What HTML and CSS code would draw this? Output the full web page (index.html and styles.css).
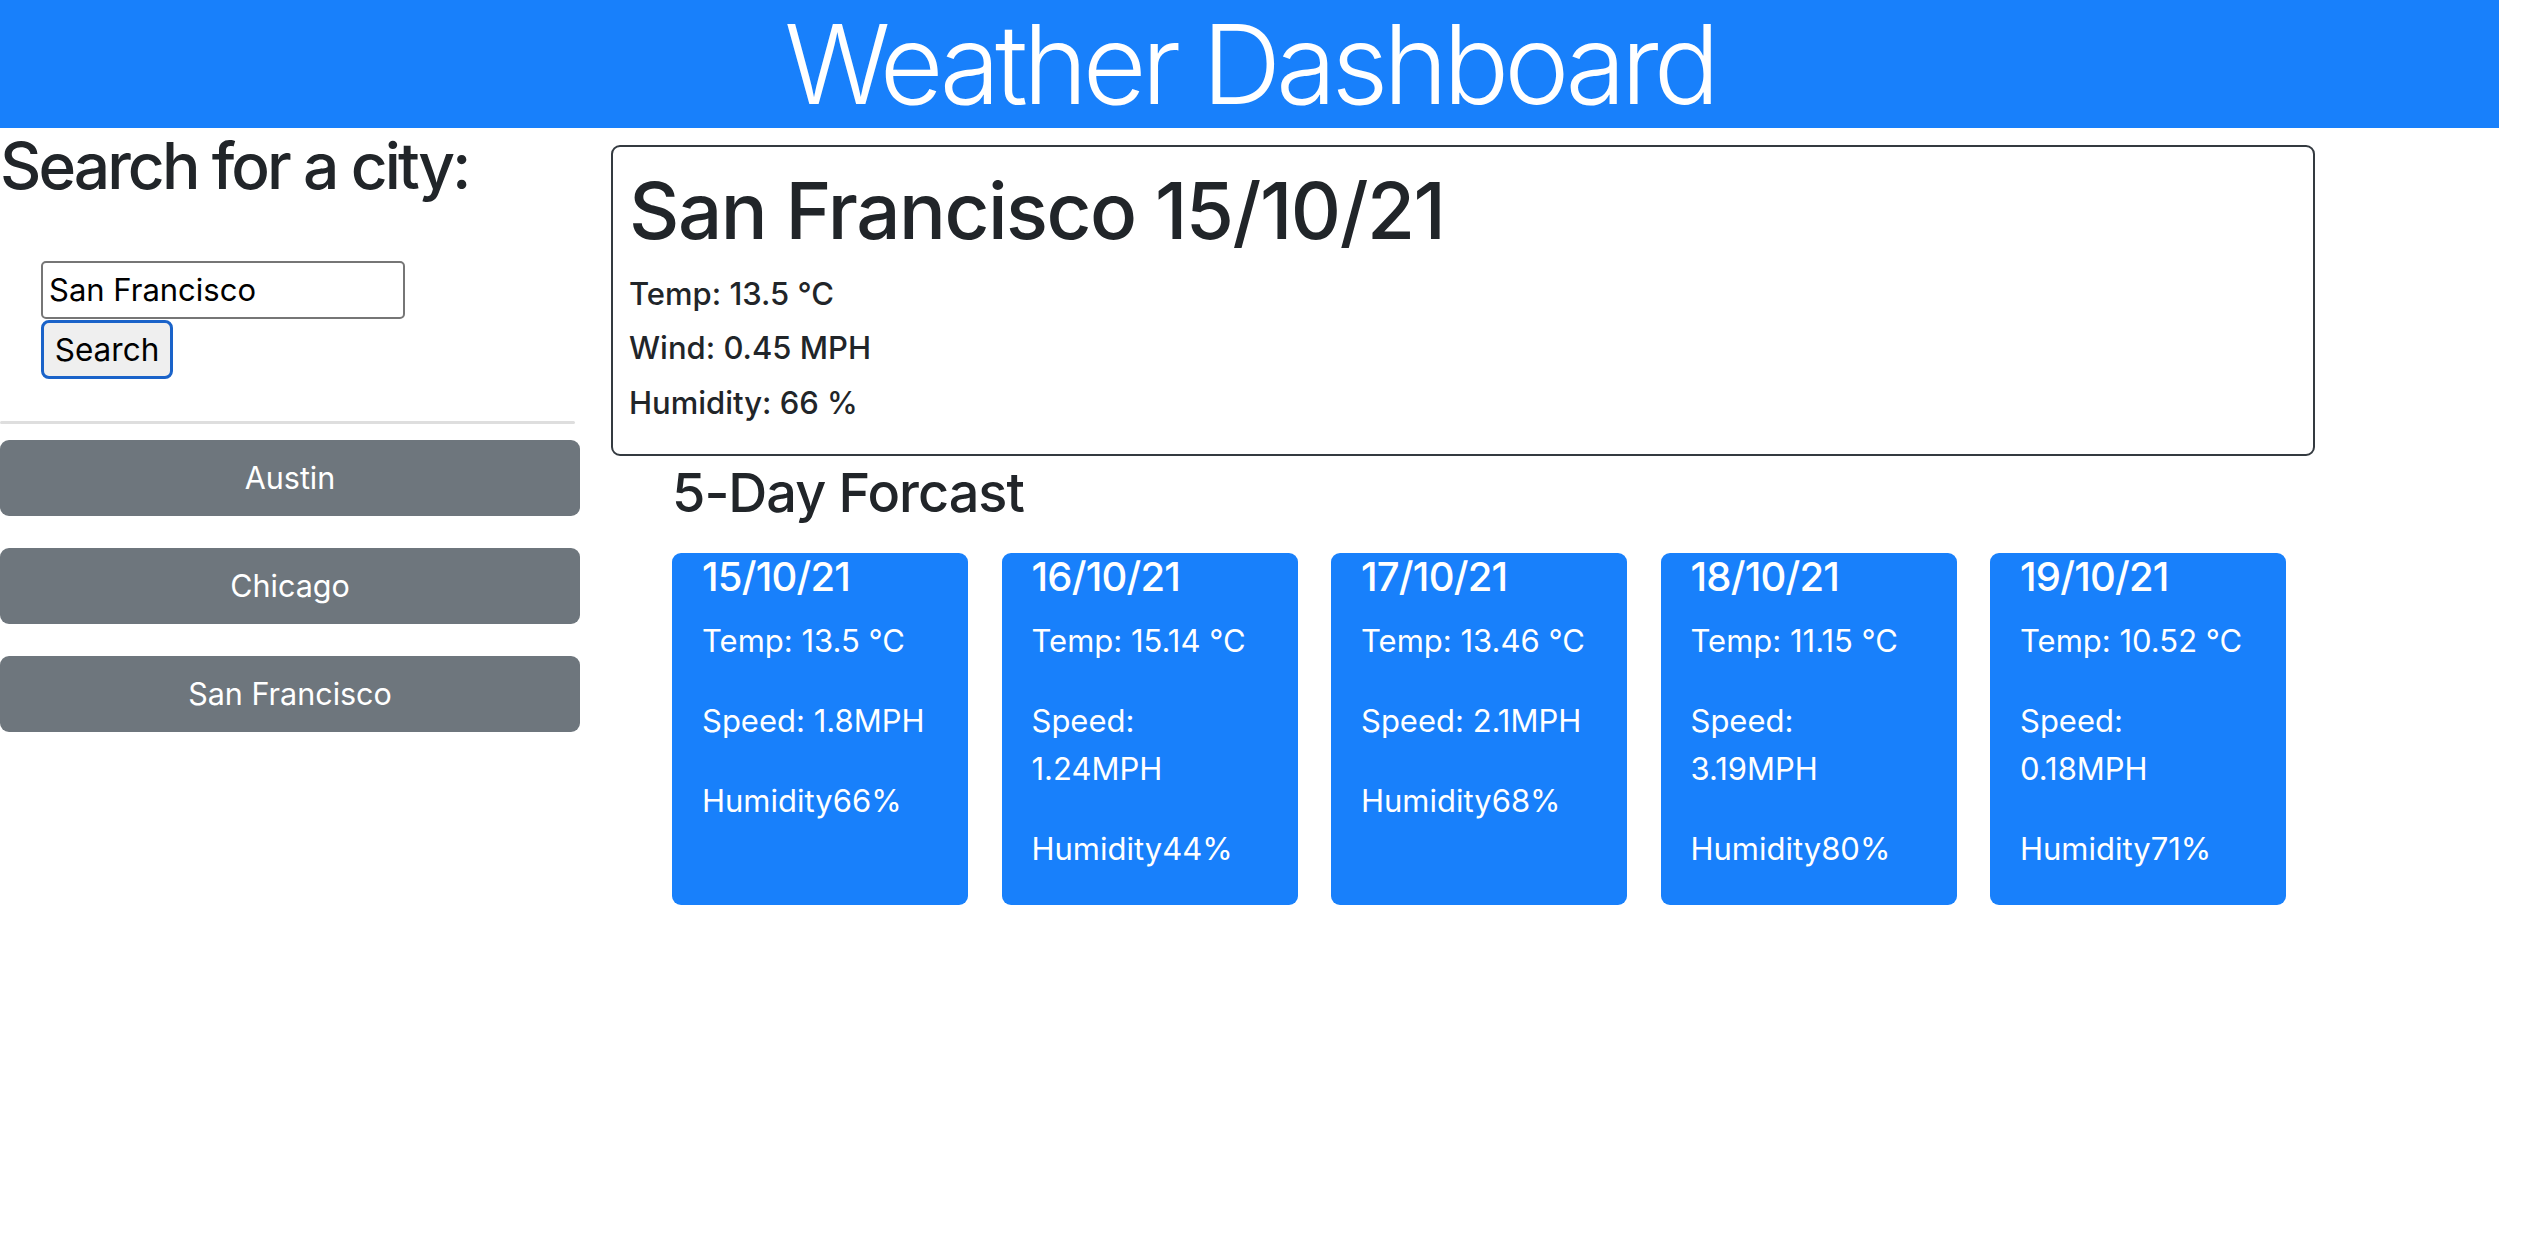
FILE: index.html
```html
<!DOCTYPE html>
<html lang="en">
<head>
<meta charset="utf-8">
<title>Weather Dashboard</title>
<link rel="stylesheet" href="styles.css">
</head>
<body>
<header class="topbar">
  <h1 class="app-title">Weather Dashboard</h1>
</header>
<main class="layout">
  <aside class="sidebar">
    <h2 class="search-title">Search for a city:</h2>
    <form class="search-form">
      <input class="search-input" type="text" value="San Francisco">
      <button class="search-btn" type="button">Search</button>
    </form>
    <hr class="divider">
    <div class="history">
      <button class="history-btn" type="button">Austin</button>
      <button class="history-btn" type="button">Chicago</button>
      <button class="history-btn" type="button">San Francisco</button>
    </div>
  </aside>
  <section class="content">
    <div class="current">
      <h1 class="current-title">San Francisco 15/10/21</h1>
      <h6 class="current-stat">Temp: 13.5 °C</h6>
      <h6 class="current-stat">Wind: 0.45 MPH</h6>
      <h6 class="current-stat">Humidity: 66 %</h6>
    </div>
    <div class="forecast">
      <h3 class="forecast-title">5-Day Forcast</h3>
      <div class="forecast-row">
        <div class="day-card">
          <h5 class="day-date">15/10/21</h5>
          <p class="day-stat">Temp: 13.5 °C</p>
          <p class="day-stat">Speed: 1.8MPH</p>
          <p class="day-stat">Humidity66%</p>
        </div>
        <div class="day-card">
          <h5 class="day-date">16/10/21</h5>
          <p class="day-stat">Temp: 15.14 °C</p>
          <p class="day-stat">Speed: 1.24MPH</p>
          <p class="day-stat">Humidity44%</p>
        </div>
        <div class="day-card">
          <h5 class="day-date">17/10/21</h5>
          <p class="day-stat">Temp: 13.46 °C</p>
          <p class="day-stat">Speed: 2.1MPH</p>
          <p class="day-stat">Humidity68%</p>
        </div>
        <div class="day-card">
          <h5 class="day-date">18/10/21</h5>
          <p class="day-stat">Temp: 11.15 °C</p>
          <p class="day-stat">Speed: 3.19MPH</p>
          <p class="day-stat">Humidity80%</p>
        </div>
        <div class="day-card">
          <h5 class="day-date">19/10/21</h5>
          <p class="day-stat">Temp: 10.52 °C</p>
          <p class="day-stat">Speed: 0.18MPH</p>
          <p class="day-stat">Humidity71%</p>
        </div>
      </div>
    </div>
  </section>
</main>
</body>
</html>
```
FILE: styles.css
```css
* {
  box-sizing: border-box;
}

html, body {
  margin: 0;
  padding: 0;
  background: #ffffff;
}

body {
  font-family: Inter, "Noto Sans", "Liberation Sans", sans-serif;
  color: #212529;
  font-size: 32px;
  line-height: 1.5;
}

.topbar {
  width: 2499px;
  height: 128px;
  background: #1880fb;
  display: flex;
  justify-content: center;
}

.app-title {
  margin: 0;
  font-size: 110px;
  font-weight: 300;
  line-height: 128px;
  color: #ffffff;
  letter-spacing: -5px;
}

.layout {
  display: flex;
  align-items: flex-start;
  width: 2499px;
}

.sidebar {
  width: 580px;
  flex: none;
}

.search-title {
  margin: 0;
  font-size: 64px;
  font-weight: 500;
  line-height: 1.2;
  letter-spacing: -2.9px;
}

.search-form {
  display: flex;
  flex-direction: column;
  align-items: flex-start;
  padding: 56px 0 0 41px;
}

.search-input {
  width: 364px;
  height: 58px;
  border: 2px solid #767676;
  border-radius: 5px;
  padding: 0 6px;
  font-family: Inter, "Noto Sans", sans-serif;
  font-size: 31px;
  color: #000000;
  background: #ffffff;
  outline: none;
}

.search-btn {
  width: 132px;
  height: 59px;
  margin-top: 1px;
  border: 3px solid #1a63c9;
  border-radius: 8px;
  background: #efefef;
  font-family: Inter, "Noto Sans", sans-serif;
  font-size: 31.5px;
  color: #000000;
  padding: 0;
}

.divider {
  margin: 42px 0 16px 0;
  width: 575px;
  height: 3px;
  border: none;
  border-radius: 2px;
  background: #dedede;
}

.history {
  display: flex;
  flex-direction: column;
  gap: 32px;
}

.history-btn {
  width: 580px;
  height: 76px;
  border: none;
  border-radius: 9px;
  background: #6e767d;
  color: #ffffff;
  font-family: Inter, "Noto Sans", sans-serif;
  font-size: 30.5px;
  padding: 0;
}

.content {
  margin-left: 31px;
  width: 1704px;
  flex: none;
}

.current {
  margin-top: 17px;
  border: 2px solid #343a40;
  border-radius: 9px;
  padding: 16px;
}

.current-title {
  margin: 0 0 16px 0;
  font-size: 78px;
  font-weight: 500;
  line-height: 96px;
  letter-spacing: -1.5px;
}

.current-stat {
  margin: 0 0 16px 0;
  font-size: 31px;
  font-weight: 500;
  line-height: 38.4px;
}

.forecast {
  padding-left: 61px;
}

.forecast-title {
  margin: 4px 0 28px 0;
  font-size: 54px;
  font-weight: 500;
  line-height: 65px;
  letter-spacing: -1px;
}

.forecast-row {
  display: flex;
  gap: 33.5px;
}

.day-card {
  width: 296px;
  flex: none;
  background: #1880fb;
  color: #ffffff;
  border-radius: 9px;
  padding: 0 34px 0 30px;
}

.day-date {
  margin: 0 0 16px 0;
  font-size: 40px;
  font-weight: 500;
  line-height: 48px;
  letter-spacing: -0.8px;
}

.day-stat {
  margin: 0 0 32px 0;
  font-size: 31px;
  line-height: 48px;
}
```
